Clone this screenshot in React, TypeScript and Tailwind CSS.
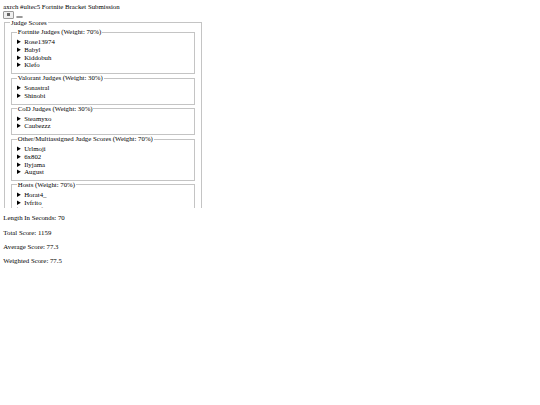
const groups = [
  { title: 'Fortnite Judges (Weight: 70%)', judges: ['Rose13974', 'Babyl', 'Kiddobuh', 'Klefo'] },
  { title: 'Valorant Judges (Weight: 30%)', judges: ['Sonastral', 'Shinobi'] },
  { title: 'CoD Judges (Weight: 30%)', judges: ['Steamyxo', 'Caubezzz'] },
  { title: 'Other/Multiassigned Judge Scores (Weight: 70%)', judges: ['Urlmoji', '6x802', 'Ilyjama', 'August'] },
  { title: 'Hosts (Weight: 70%)', judges: ['Horat4_', 'Ivfrito', 'Mellofy'] },
];

const stats = [
  'Length In Seconds: 70',
  'Total Score: 1159',
  'Average Score: 77.3',
  'Weighted Score: 77.5',
];

function JudgeGroup({ title, judges }: { title: string; judges: string[] }) {
  return (
    <fieldset className="mx-[0.83px] border border-[#c4c4c4] px-[5px] pt-[2.3px] pb-[4.2px]">
      <legend className="px-[0.83px]">{title}</legend>
      {judges.map((j) => (
        <details key={j}>
          <summary>{j}</summary>
        </details>
      ))}
    </fieldset>
  );
}

export default function App() {
  return (
    <div className="min-h-[405px] bg-white p-[3.33px] font-['Liberation_Serif',serif] text-[6.8px] leading-[7.67px] text-black">
      <div>axrch #ultec5 Fortnite Bracket Submission</div>
      <div className="flex items-end gap-[2px]">
        <button className="flex h-[7.5px] w-[11px] items-center justify-center rounded-[1px] border border-[#9a9a9a] bg-[#efefef]">
          <span className="block h-[3px] w-[3px] bg-[#666]" />
        </button>
        <span className="mb-[0.5px] inline-block h-[2.5px] w-[7px] rounded-[1px] border border-[#9a9a9a] bg-[#efefef]" />
      </div>
      <div className="h-[189px] w-[199px] overflow-hidden">
        <fieldset className="mx-[0.83px] border border-[#c4c4c4] px-[5px] pt-[2.3px] pb-[4.2px]">
          <legend className="px-[0.83px]">Judge Scores</legend>
          {groups.map((g) => (
            <JudgeGroup key={g.title} title={g.title} judges={g.judges} />
          ))}
        </fieldset>
      </div>
      {stats.map((s) => (
        <p key={s} className="my-[6.7px]">
          {s}
        </p>
      ))}
    </div>
  );
}
